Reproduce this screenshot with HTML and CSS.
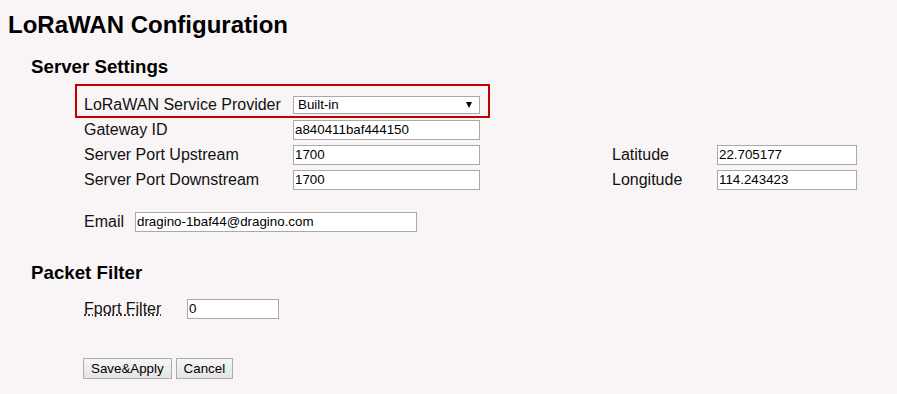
FILE: index.html
```html
<!DOCTYPE html>
<html lang="en">
<head>
<meta charset="utf-8">
<title>LoRaWAN Configuration</title>
<link rel="stylesheet" href="styles.css">
</head>
<body>
<h1 class="title">LoRaWAN Configuration</h1>

<h2 class="section section-first">Server Settings</h2>
<div class="server-grid">
  <div class="highlight"></div>
  <label class="lbl">LoRaWAN Service Provider</label>
  <span class="select-wrap">
    <select class="select"><option>Built-in</option></select>
    <span class="arrow"></span>
  </span>
  <label class="lbl">Gateway ID</label>
  <input class="field field-wide" type="text" value="a840411baf444150">
  <label class="lbl">Server Port Upstream</label>
  <input class="field field-wide" type="text" value="1700">
  <label class="lbl-r">Latitude</label>
  <input class="field field-geo" type="text" value="22.705177">
  <label class="lbl">Server Port Downstream</label>
  <input class="field field-wide" type="text" value="1700">
  <label class="lbl-r">Longitude</label>
  <input class="field field-geo" type="text" value="114.243423">
</div>

<div class="row email-row">
  <label class="email-lbl">Email</label>
  <input class="field field-email" type="text" value="dragino-1baf44@dragino.com">
</div>

<h2 class="section section-packet">Packet Filter</h2>
<div class="row fport-row">
  <label class="fport-lbl"><abbr class="abbr" title="Filter packets by FPort">Fport Filter</abbr></label>
  <input class="field field-fport" type="text" value="0">
</div>

<div class="actions">
  <button class="btn" type="button">Save&amp;Apply</button>
  <button class="btn" type="button">Cancel</button>
</div>
</body>
</html>
```

FILE: styles.css
```css
html, body {
  margin: 0;
  padding: 0;
}
body {
  background: #f9f5f6;
  color: #000;
  font-family: "Liberation Sans", Arial, sans-serif;
  font-size: 16px;
  width: 897px;
  height: 394px;
  overflow: hidden;
}
.title {
  margin: 11px 0 0;
  padding-left: 8px;
  font-size: 24px;
  line-height: 28px;
  font-weight: bold;
}
.section {
  margin: 0;
  padding-left: 31px;
  font-size: 18.72px;
  line-height: 22px;
  font-weight: bold;
}
.section-first { margin-top: 17px; }
.section-packet { margin-top: 28px; }

.server-grid {
  position: relative;
  margin: 14px 0 0 84px;
  display: grid;
  grid-template-columns: 209px 187px 132px 105px 140px;
  grid-auto-rows: 25px;
  align-items: center;
  width: 773px;
}
.lbl { grid-column: 1; line-height: 18px; color: #111; }
.lbl-r { grid-column: 4; line-height: 18px; color: #111; }

.highlight {
  position: absolute;
  left: -9px;
  top: -8px;
  width: 415px;
  height: 34px;
  border: 2px solid #c00000;
  box-sizing: border-box;
  pointer-events: none;
}

.select-wrap {
  position: relative;
  display: block;
  width: 187px;
  height: 18px;
}
.select {
  appearance: none;
  -webkit-appearance: none;
  display: block;
  width: 187px;
  height: 18px;
  box-sizing: border-box;
  margin: 0;
  border: 1px solid #a9a9a9;
  border-radius: 0;
  background: #fff;
  padding: 0 0 0 4px;
  font-family: "Liberation Sans", Arial, sans-serif;
  font-size: 13.33px;
  line-height: 16px;
  color: #000;
}
.arrow {
  position: absolute;
  right: 8px;
  top: 6px;
  width: 0;
  height: 0;
  border-left: 3px solid transparent;
  border-right: 3px solid transparent;
  border-top: 6px solid #000;
}

.field {
  display: block;
  box-sizing: border-box;
  height: 20px;
  margin: 0;
  border: 1px solid #a9a9a9;
  border-radius: 0;
  background: #fff;
  padding: 0 1px;
  font-family: "Liberation Sans", Arial, sans-serif;
  font-size: 13.33px;
  color: #000;
}
.field-wide { width: 187px; }
.field-geo { width: 140px; }
.field-email { width: 282px; }
.field-fport { width: 92px; }

.row {
  display: flex;
  align-items: center;
  height: 25px;
  margin-left: 84px;
  color: #111;
  line-height: 18px;
}
.email-row { margin-top: 17px; }
.email-lbl { width: 51px; }
.fport-row { margin-top: 12px; }
.fport-lbl { width: 103px; }
.abbr {
  text-decoration: underline dotted;
  text-underline-offset: 1px;
}

.actions {
  display: flex;
  gap: 4px;
  margin: 37px 0 0 83px;
}
.btn {
  box-sizing: border-box;
  height: 21px;
  margin: 0;
  padding: 0 7px;
  border: 1px solid #adadad;
  border-radius: 0;
  background: linear-gradient(#f6f6f6, #e4e4e4);
  font-family: "Liberation Sans", Arial, sans-serif;
  font-size: 13.33px;
  line-height: 19px;
  color: #000;
}
```
